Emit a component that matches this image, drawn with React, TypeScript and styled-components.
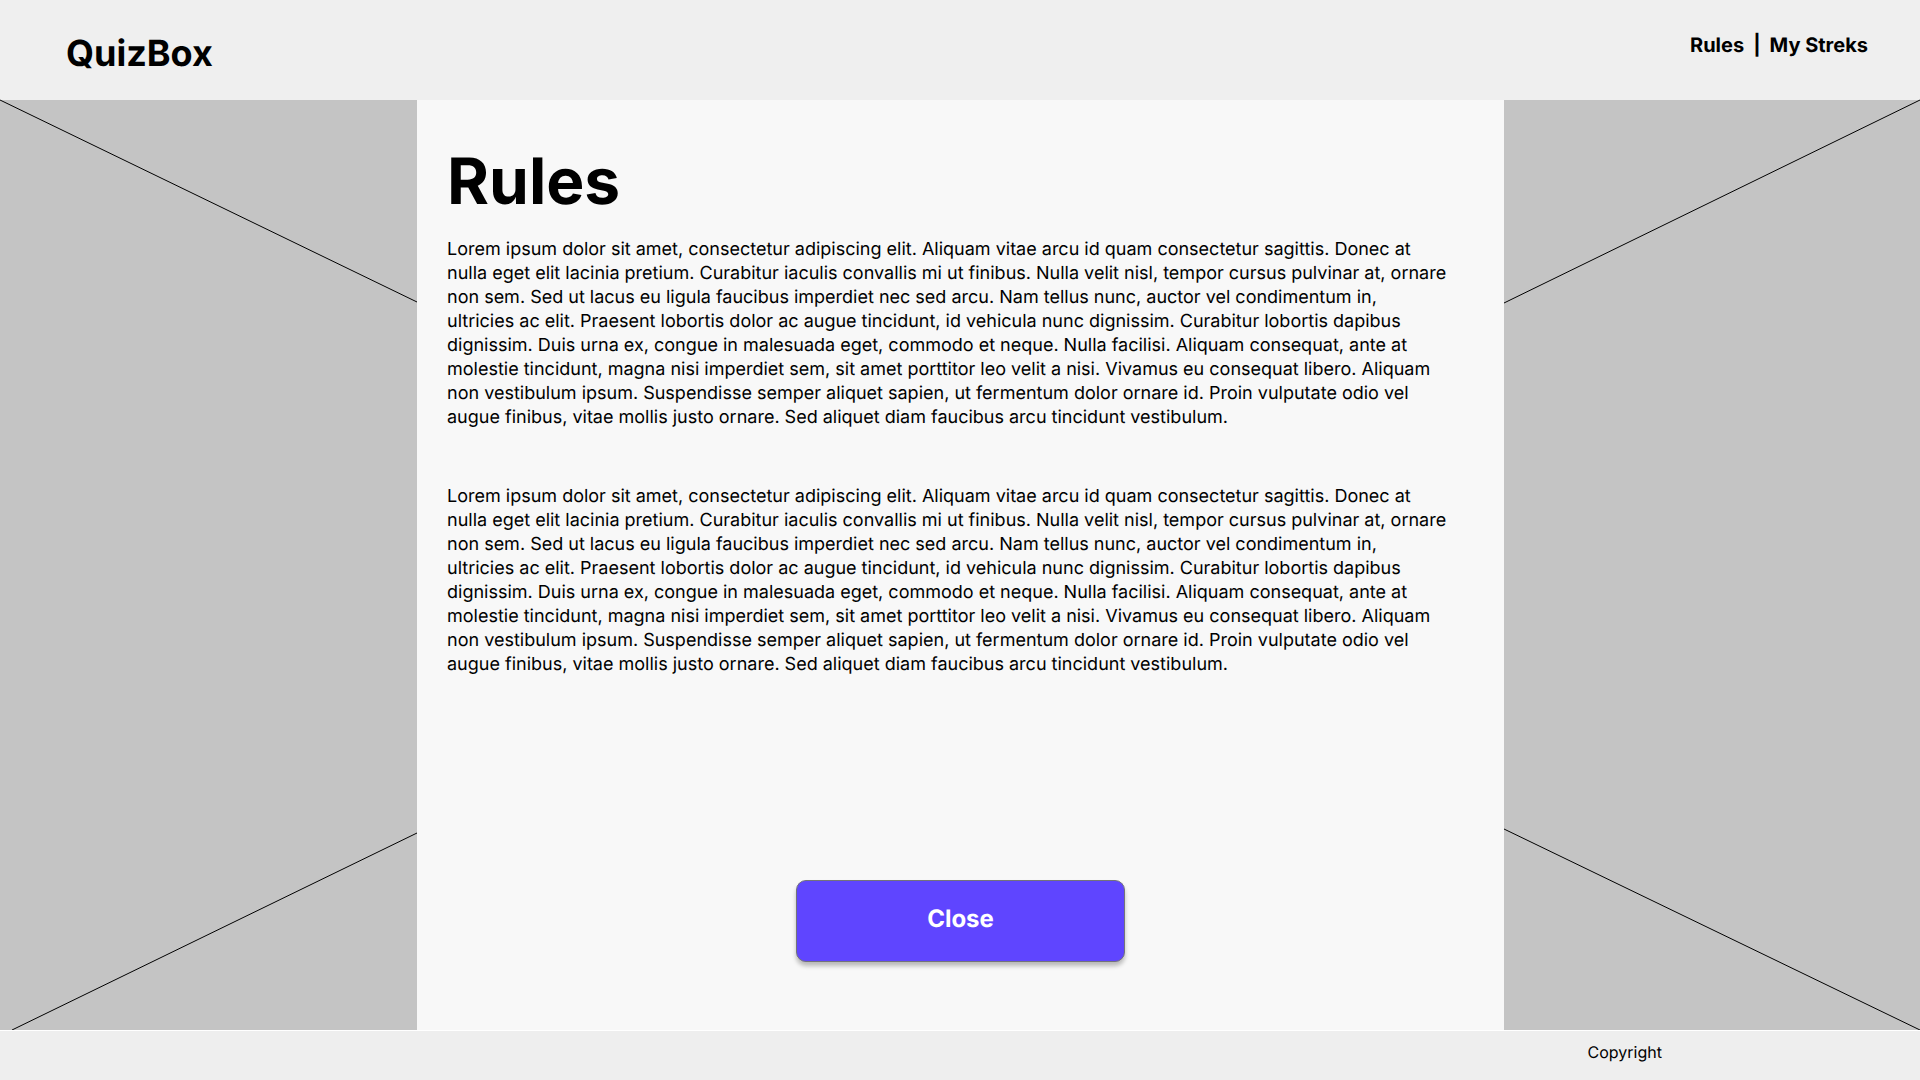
import React from "react";
import styled, { createGlobalStyle } from "styled-components";

const GlobalStyle = createGlobalStyle`
  *, *::before, *::after { box-sizing: border-box; }
  body {
    margin: 0;
    background: #ffffff;
    color: #000000;
    font-family: Inter, "Liberation Sans", sans-serif;
    text-rendering: geometricPrecision;
  }
`;

const Page = styled.div`
  min-height: 100vh;
  display: flex;
  flex-direction: column;
`;

const Header = styled.header`
  display: flex;
  justify-content: space-between;
  align-items: flex-start;
  min-height: 100px;
  padding: 31px 52px 24px 66px;
  background: #efefef;
`;

const Logo = styled.a`
  color: inherit;
  text-decoration: none;
  font-size: 36px;
  line-height: 44px;
  font-weight: 700;
`;

const Nav = styled.nav`
  display: flex;
  gap: 9px;
  padding-top: 2px;
  font-size: 20px;
  line-height: 24px;
  font-weight: 700;
`;

const NavLink = styled.a`
  color: inherit;
  text-decoration: none;
`;

const Main = styled.main`
  flex: 1;
  display: grid;
  grid-template-columns: 417fr 1087fr 416fr;
`;

const Placeholder = styled.aside`
  display: grid;
  background: #c4c4c4;
`;

const Lines = styled.svg`
  width: 100%;
  height: 100%;
  min-height: 0;
  contain: size;
  overflow: visible;

  line {
    stroke: #000000;
    stroke-width: 1px;
    vector-effect: non-scaling-stroke;
  }
`;

const Panel = styled.section`
  display: flex;
  flex-direction: column;
  padding: 43px 30px 68px;
  background: #f8f8f8;
`;

const Title = styled.h1`
  margin: 0 0 17px;
  font-size: 64px;
  line-height: 78px;
  font-weight: 700;
`;

const Copy = styled.div`
  display: flex;
  flex-direction: column;
  gap: 55px;
  padding: 0 26px 55px 0;
`;

const Paragraph = styled.p`
  margin: 0;
  font-size: 18px;
  line-height: 24px;
`;

const CloseButton = styled.button`
  align-self: center;
  width: 329px;
  max-width: 100%;
  height: 82px;
  margin-top: auto;
  padding: 0 0 4px;
  border: 1px solid #73737a;
  border-radius: 10px;
  background: #5f45ff;
  box-shadow: 0 4px 4px rgba(0, 0, 0, 0.25);
  color: #ffffff;
  font-family: inherit;
  font-size: 24px;
  line-height: 30px;
  font-weight: 700;
  text-rendering: inherit;
  cursor: pointer;
`;

const Footer = styled.footer`
  display: flex;
  justify-content: flex-end;
  min-height: 50px;
  padding: 11px 258px 12px;
  border-top: 1px solid #ffffff;
  background: #eeeeee;
  font-size: 16px;
  line-height: 20px;
`;

const rules = [
  "Lorem ipsum dolor sit amet, consectetur adipiscing elit. Aliquam vitae arcu id quam consectetur sagittis. Donec at nulla eget elit lacinia pretium. Curabitur iaculis convallis mi ut finibus. Nulla velit nisl, tempor cursus pulvinar at, ornare non sem. Sed ut lacus eu ligula faucibus imperdiet nec sed arcu. Nam tellus nunc, auctor vel condimentum in, ultricies ac elit. Praesent lobortis dolor ac augue tincidunt, id vehicula nunc dignissim. Curabitur lobortis dapibus dignissim. Duis urna ex, congue in malesuada eget, commodo et neque. Nulla facilisi. Aliquam consequat, ante at molestie tincidunt, magna nisi imperdiet sem, sit amet porttitor leo velit a nisi. Vivamus eu consequat libero. Aliquam non vestibulum ipsum. Suspendisse semper aliquet sapien, ut fermentum dolor ornare id. Proin vulputate odio vel augue finibus, vitae mollis justo ornare. Sed aliquet diam faucibus arcu tincidunt vestibulum.",
  "Lorem ipsum dolor sit amet, consectetur adipiscing elit. Aliquam vitae arcu id quam consectetur sagittis. Donec at nulla eget elit lacinia pretium. Curabitur iaculis convallis mi ut finibus. Nulla velit nisl, tempor cursus pulvinar at, ornare non sem. Sed ut lacus eu ligula faucibus imperdiet nec sed arcu. Nam tellus nunc, auctor vel condimentum in, ultricies ac elit. Praesent lobortis dolor ac augue tincidunt, id vehicula nunc dignissim. Curabitur lobortis dapibus dignissim. Duis urna ex, congue in malesuada eget, commodo et neque. Nulla facilisi. Aliquam consequat, ante at molestie tincidunt, magna nisi imperdiet sem, sit amet porttitor leo velit a nisi. Vivamus eu consequat libero. Aliquam non vestibulum ipsum. Suspendisse semper aliquet sapien, ut fermentum dolor ornare id. Proin vulputate odio vel augue finibus, vitae mollis justo ornare. Sed aliquet diam faucibus arcu tincidunt vestibulum.",
];

export default function App() {
  return (
    <>
      <GlobalStyle />
      <Page>
        <Header>
          <Logo href="#">QuizBox</Logo>
          <Nav>
            <NavLink href="#rules">Rules</NavLink>
            <span>|</span>
            <NavLink href="#streks">My Streks</NavLink>
          </Nav>
        </Header>
        <Main>
          <Placeholder>
            <Lines viewBox="0 0 417 930" preserveAspectRatio="none" aria-hidden="true">
              <line x1="0" y1="0" x2="417" y2="202" />
              <line x1="12" y1="930" x2="417" y2="733" />
            </Lines>
          </Placeholder>
          <Panel id="rules">
            <Title>Rules</Title>
            <Copy>
              {rules.map((text, index) => (
                <Paragraph key={index}>{text}</Paragraph>
              ))}
            </Copy>
            <CloseButton type="button">Close</CloseButton>
          </Panel>
          <Placeholder>
            <Lines viewBox="0 0 416 930" preserveAspectRatio="none" aria-hidden="true">
              <line x1="416" y1="0" x2="0" y2="203" />
              <line x1="0" y1="729" x2="416" y2="930" />
            </Lines>
          </Placeholder>
        </Main>
        <Footer>Copyright</Footer>
      </Page>
    </>
  );
}
